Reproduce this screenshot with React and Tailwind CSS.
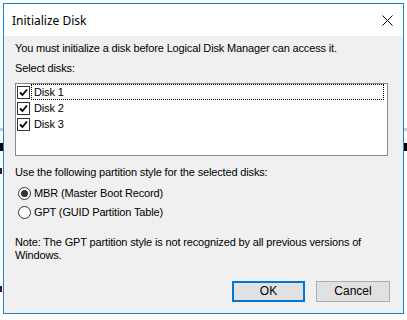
import { useState } from 'react';

const disks = ["Disk 1", "Disk 2", "Disk 3"];

function Check({ checked }) {
    return (
        <span className="w-[13px] h-[13px] border border-[#333] bg-white flex items-center justify-center shrink-0">
            {checked && (
                <svg width="9" height="9" viewBox="0 0 9 9">
                    <path d="M1 4.5 L3.5 7 L8 1.5" stroke="#000" strokeWidth="1.8" fill="none" />
                </svg>
            )}
        </span>
    );
}

function Radio({ checked }) {
    return (
        <span className="w-[13px] h-[13px] rounded-full border border-[#333] bg-white flex items-center justify-center shrink-0">
            {checked && <span className="w-[7px] h-[7px] rounded-full bg-[#333]" />}
        </span>
    );
}

// the bits of the window behind the dialog that show on both sides
function Edge({ left }) {
    return (
        <div className="w-[3px] flex flex-col shrink-0">
            <div className="h-[125px]" />
            <div className="h-[3px] bg-[#c8c8c8]" />
            <div className="h-[12px]" />
            <div className="h-[8px] bg-black" />
            {left && (
                <>
                    <div className="h-[17px]" />
                    <div className="h-[6px] w-[2px] bg-[#4a1020]" />
                    <div className="h-[112px]" />
                    <div className="h-[6px] w-[2px] bg-[#4a1020]" />
                </>
            )}
        </div>
    );
}

export default function App() {
    const [checked, setChecked] = useState([true, true, true]);
    const [style, setStyle] = useState("mbr");

    return (
        <div className="w-[407px] h-[320px] bg-white flex pt-[3px] overflow-hidden text-black" style={{ fontFamily: '"Liberation Sans", Arial, sans-serif' }}>
            <Edge left />
            <div className="w-[401px] h-[311px] border border-[#1883d7] flex flex-col shrink-0">
                <div className="h-[32px] bg-white flex items-center justify-between pl-[8px] pr-[10px]">
                    <span className="text-[12px] leading-[14px] pt-[2px]" style={{ fontFamily: '"Noto Sans", sans-serif' }}>Initialize Disk</span>
                    <svg width="11" height="11" viewBox="0 0 11 11">
                        <path d="M0.5 0.5 L10.5 10.5 M10.5 0.5 L0.5 10.5" stroke="#000" strokeWidth="1" fill="none" />
                    </svg>
                </div>
                <div className="flex-1 bg-[#f0f0f0] flex flex-col pl-[11px] pr-[13px] pt-[6px] text-[11px] leading-[13px] tracking-[-0.15px]">
                    <p>You must initialize a disk before Logical Disk Manager can access it.</p>
                    <p className="mt-[7px]">Select disks:</p>
                    <div className="mt-[8px] w-[373px] h-[73px] border border-[#828790] bg-white pt-0">
                        {disks.map((d, i) => (
                            <div key={d} className="h-[16px] flex items-center pl-[1px] cursor-pointer" onClick={() => setChecked(checked.map((c, j) => (j === i ? !c : c)))}>
                                <Check checked={checked[i]} />
                                <span className={`flex-1 h-[16px] ml-[1px] mr-[3px] pl-[2px] flex items-center ${i === 0 ? 'border border-dotted border-black' : 'border border-transparent'}`}>{d}</span>
                            </div>
                        ))}
                    </div>
                    <p className="mt-[10px]">Use the following partition style for the selected disks:</p>
                    <div className="mt-[5px] flex flex-col">
                        <label className="h-[19px] flex items-center gap-[3px] pl-[3px]" onClick={() => setStyle("mbr")}>
                            <Radio checked={style === "mbr"} />
                            <span>MBR (Master Boot Record)</span>
                        </label>
                        <label className="h-[19px] flex items-center gap-[3px] pl-[3px]" onClick={() => setStyle("gpt")}>
                            <Radio checked={style === "gpt"} />
                            <span>GPT (GUID Partition Table)</span>
                        </label>
                    </div>
                    <p className="mt-[14px]">Note: The GPT partition style is not recognized by all previous versions of Windows.</p>
                    <div className="mt-auto mb-[11px] flex justify-end gap-[11px] tracking-normal">
                        <button className="w-[73px] h-[21px] bg-[#e1e1e1] border-2 border-[#0078d7] text-[12px]">OK</button>
                        <button className="w-[74px] h-[21px] bg-[#e1e1e1] border border-[#adadad] text-[12px]">Cancel</button>
                    </div>
                </div>
            </div>
            <Edge />
        </div>
    );
}
